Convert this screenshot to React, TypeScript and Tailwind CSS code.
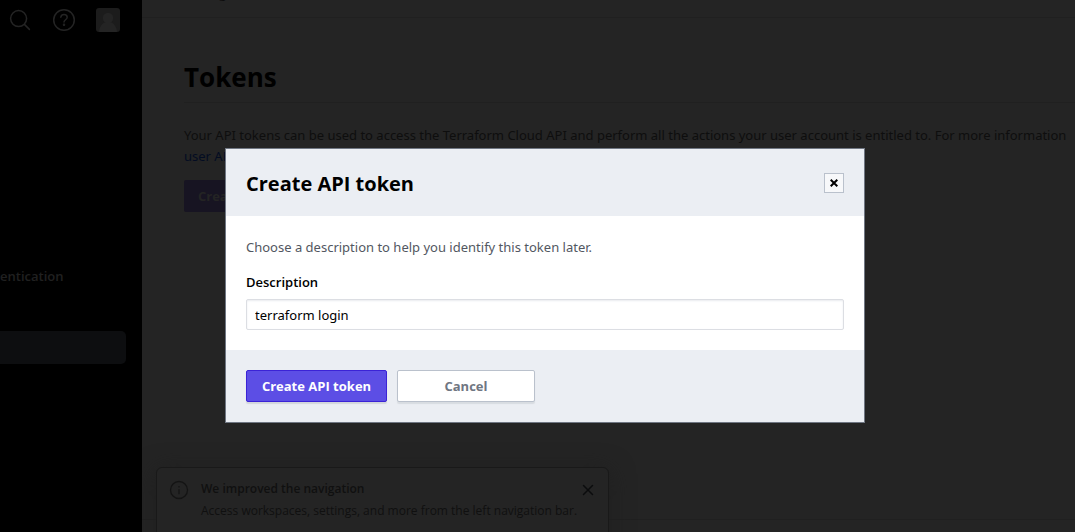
import { useState } from "react";

const SearchIcon = () => (
  <svg className="size-6" viewBox="0 0 24 24" fill="none" stroke="currentColor" strokeWidth="1.5" strokeLinecap="round" aria-hidden="true">
    <circle cx="10.6" cy="10.6" r="8" />
    <path d="M16.4 16.4 21.4 21.4" />
  </svg>
);

const HelpIcon = () => (
  <svg className="size-6" viewBox="0 0 24 24" fill="none" stroke="currentColor" strokeWidth="1.5" strokeLinecap="round" aria-hidden="true">
    <circle cx="12" cy="12" r="10.3" />
    <path d="M8.8 9.2C9.2 7.3 10.5 6.5 12 6.5c1.8 0 3.2 1.1 3.2 2.8 0 2.4-3.2 2.5-3.2 4.7" />
    <circle cx="12" cy="16.8" r="0.5" fill="currentColor" />
  </svg>
);

const Avatar = () => (
  <svg className="size-6 rounded-[3px]" viewBox="0 0 24 24" aria-hidden="true">
    <rect width="24" height="24" fill="#1c1c1c" />
    <circle cx="12" cy="10" r="5.2" fill="#242424" />
    <path d="M3 24c.4-5 3-9 7-10h4c4 1 6.600 5 7 10z" fill="#242424" />
  </svg>
);

function Sidebar() {
  return (
    <aside className="flex w-[142px] shrink-0 flex-col bg-black text-[#242424]">
      <div className="flex items-center gap-5 py-2 pl-2">
        <button type="button" aria-label="Search" className="size-6"><SearchIcon /></button>
        <button type="button" aria-label="Help" className="size-6"><HelpIcon /></button>
        <button type="button" aria-label="Account" className="size-6"><Avatar /></button>
      </div>
      <nav className="mt-[226px] flex flex-col pr-4">
        <a href="#authentication" className="text-[13px] leading-5 font-semibold text-[#202020]">entication</a>
        <a href="#tokens" aria-label="Tokens" className="mt-[45px] h-[33px] rounded-r-[5px] bg-[#0d0e10]" />
      </nav>
    </aside>
  );
}

function Notice() {
  return (
    <div className="absolute top-[467px] left-[14px] flex h-24 w-[453px] items-start rounded-md border border-[#191919] bg-[#242424] px-3 pt-3 shadow-[0_4px_24px_#1f1f1f]">
      <svg className="size-5 shrink-0 text-[#141414]" viewBox="0 0 20 20" fill="none" stroke="currentColor" strokeWidth="1.300" aria-hidden="true">
        <circle cx="10" cy="10" r="8.500" />
        <path d="M10 9.200v5M10 6v1.400" />
      </svg>
      <div className="ml-3 grow text-[12px] whitespace-nowrap text-[#101010]">
        <p className="leading-[18px] font-semibold">We improved the navigation</p>
        <p className="mt-1 leading-[18px]">Access workspaces, settings, and more from the left navigation bar.</p>
      </div>
      <button type="button" aria-label="Dismiss" className="mt-[2px] size-4 shrink-0 text-[#0b0c0d]">
        <svg className="size-4" viewBox="0 0 16 16" stroke="currentColor" strokeWidth="1.500" strokeLinecap="round" aria-hidden="true">
          <path d="m3.500 3.500 9 9m0-9-9 9" />
        </svg>
      </button>
    </div>
  );
}

function TokensPage() {
  return (
    <main className="relative flex min-w-0 grow flex-col overflow-hidden bg-[#242424]">
      <div className="flex h-[18px] items-end overflow-hidden border-b border-[#202020] pb-4 pl-[42px] text-[13px] leading-4 text-[#0d0d0d]">
        <span>Settings /</span>
      </div>
      <div className="grow pt-10 pl-[42px]">
        <h1 className="border-b border-[#202020] pb-[6px] text-[26px] leading-[38px] font-bold text-black">Tokens</h1>
        <p className="mt-[22px] font-['Noto_Sans',sans-serif] text-[13px] leading-[21px] whitespace-nowrap text-[#0e0e0e]">
          Your API tokens can be used to access the Terraform Cloud API and perform all the actions your user account is entitled to. For more information
          <br />
          <a href="#docs" className="text-[#030c22]">user API tokens</a>
        </p>
        <button type="button" className="mt-[13px] h-8 rounded-[2px] bg-[#171422] px-[14px] pt-[2px] text-[13px] font-bold text-[#242424]">Create an API token</button>
      </div>
      <hr className="mb-3 border-[#202020]" />
      <Notice />
    </main>
  );
}

function CreateTokenDialog() {
  const [description, setDescription] = useState("terraform login");
  return (
    <div className="fixed inset-0 flex items-start justify-center pt-[148px] pl-[15px]">
      <form role="dialog" aria-modal="true" aria-labelledby="dialog-title" onSubmit={(e) => e.preventDefault()} className="w-full max-w-[640px] border border-[#6f7682] bg-white">
        <header className="flex h-[67px] items-center justify-between bg-[#ebeef3] px-5">
          <h2 id="dialog-title" className="pt-[2px] text-[20px] leading-7 font-bold text-black">Create API token</h2>
          <button type="button" aria-label="Close" className="flex size-5 items-center justify-center border border-[#bac1cc] bg-[#f7f8fa] text-black">
            <svg className="size-2" viewBox="0 0 8 8" stroke="currentColor" strokeWidth="2" aria-hidden="true">
              <path d="m.7.7 6.600 6.600m0-6.600L.7 7.300" />
            </svg>
          </button>
        </header>
        <div className="px-5 py-5 text-[13px]">
          <p className="pt-px font-['Noto_Sans',sans-serif] leading-[21px] text-[#525761]">Choose a description to help you identify this token later.</p>
          <label htmlFor="description" className="mt-[14px] block leading-5 font-semibold text-black">Description</label>
          <input
            id="description"
            type="text"
            value={description}
            onChange={(e) => setDescription(e.target.value)}
            className="mt-[7px] block h-[31px] w-full rounded-[2px] border border-[#dcdee3] bg-white px-2 font-['Noto_Sans',sans-serif] text-black shadow-[inset_0_1px_2px_#e9ebef] outline-none"
          />
        </div>
        <footer className="flex gap-[10px] bg-[#ebeef3] p-5 text-[13px] font-bold">
          <button type="submit" className="h-8 w-[141px] rounded-[2px] border border-[#3b23d6] bg-[#5c4ee5] pt-[2px] text-white shadow-[0_2px_1px_#d2d6db]">Create API token</button>
          <button type="button" className="h-8 w-[138px] rounded-[2px] border border-[#bac1cc] bg-white pt-[2px] text-[#6f7682] shadow-[0_2px_1px_#d8dce1]">Cancel</button>
        </footer>
      </form>
    </div>
  );
}

export default function App() {
  return (
    <div className="flex h-screen overflow-hidden font-['Open_Sans','Noto_Sans',sans-serif]">
      <Sidebar />
      <TokensPage />
      <CreateTokenDialog />
    </div>
  );
}
